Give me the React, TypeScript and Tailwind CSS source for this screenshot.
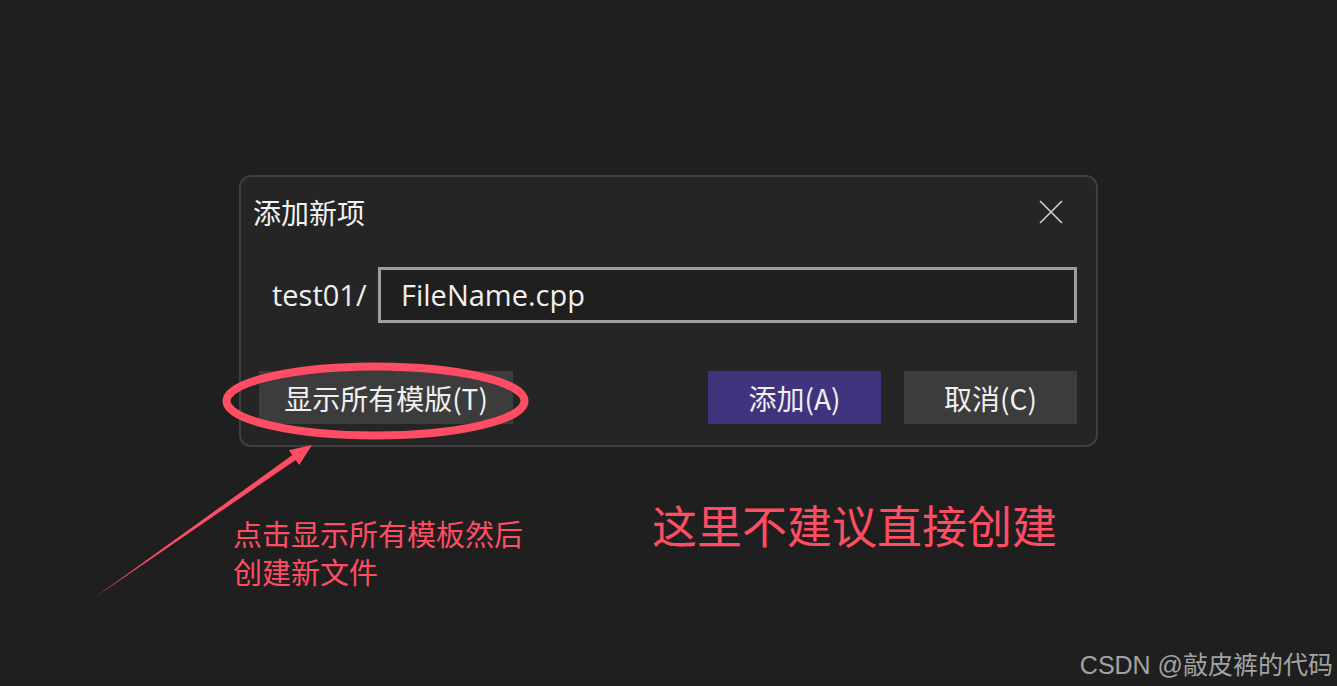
const latin = "font-['Open_Sans','Noto_Sans_CJK_SC',sans-serif]";
const cjk = "font-['Noto_Sans_CJK_SC','Noto_Sans',sans-serif]";

function CloseIcon() {
  return (
    <svg width="24" height="24" viewBox="0 0 24 24" className="text-[#d6d6d6]">
      <path d="M1 1 L23 23 M23 1 L1 23" stroke="currentColor" strokeWidth="1.5" fill="none" />
    </svg>
  );
}

function Annotations() {
  return (
    <svg
      className="absolute inset-0 pointer-events-none"
      width="1337"
      height="686"
      viewBox="0 0 1337 686"
    >
      <ellipse
        cx="375.5"
        cy="401"
        rx="149"
        ry="34.5"
        fill="none"
        stroke="#ff4d64"
        strokeWidth="8"
      />
      <polygon
        points="312,445 288.8,450.2 292.3,455.1 94,598 295.7,460 299.2,465"
        fill="#ff4d64"
      />
    </svg>
  );
}

export default function App() {
  return (
    <div className={`relative w-full h-[686px] overflow-hidden bg-[#1f1f1f] ${cjk}`}>
      <div className="pt-[175px] pl-[239px]">
        <div className="w-[859px] h-[272px] rounded-[12px] border-2 border-[#3f3f3f] bg-[#252525] flex flex-col">
          <div className="flex items-center justify-between pt-[21px] pl-[12px] pr-[33px]">
            <span className="text-[28px] leading-none text-[#f2f2f2]">添加新项</span>
            <CloseIcon />
          </div>
          <div className="flex items-center mt-[41px] pl-[31px] pr-[19px]">
            <span className={`${latin} w-[106px] text-[29px] text-[#f0f0f0]`}>test01/</span>
            <div className="flex-1 h-[56px] border-[3px] border-[#9d9d9d] bg-[#1f1f1f] flex items-center pl-[20px]">
              <span className={`${latin} text-[29px] text-[#f0f0f0]`}>FileName.cpp</span>
            </div>
          </div>
          <div className="flex items-center mt-[48px] pl-[18px] pr-[19px]">
            <button className="w-[254px] h-[53px] bg-[#3c3c3c] text-[28px] text-[#f0f0f0] flex items-center justify-center">
              显示所有模版(T)
            </button>
            <div className="flex-1" />
            <button className="w-[173px] h-[53px] bg-[#40347f] text-[28px] text-[#f0f0f0] flex items-center justify-center">
              添加(A)
            </button>
            <button className="w-[173px] h-[53px] ml-[23px] bg-[#3c3c3c] text-[28px] text-[#f0f0f0] flex items-center justify-center">
              取消(C)
            </button>
          </div>
        </div>
      </div>

      <div className="flex items-start pl-[233px]">
        <p className="w-[419px] mt-[67px] text-[29px] leading-[38px] text-[#ff4d64]">
          点击显示所有模板然后
          <br />
          创建新文件
        </p>
        <p className="mt-[55px] text-[45px] leading-none text-[#ff4d64]">这里不建议直接创建</p>
      </div>

      <Annotations />

      <div className="absolute right-[4px] bottom-[8px] text-[25px] leading-none text-[#a3a3a3] font-['Liberation_Sans','Noto_Sans_CJK_SC',sans-serif]">
        CSDN @敲皮裤的代码
      </div>
    </div>
  );
}
